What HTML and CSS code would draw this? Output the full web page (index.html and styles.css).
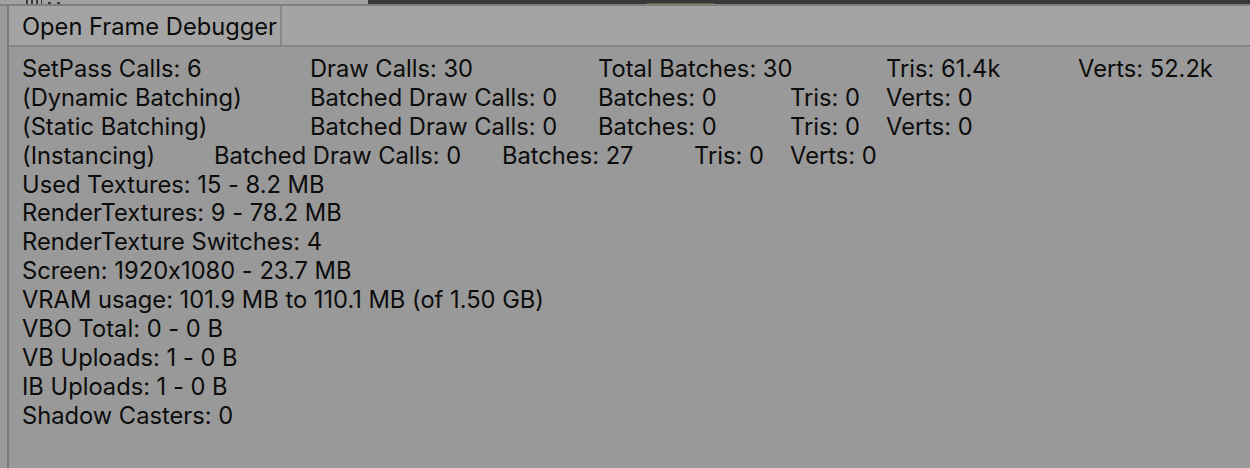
FILE: index.html
```html
<!DOCTYPE html>
<html>
<head>
<meta charset="utf-8">
<link rel="stylesheet" href="styles.css">
</head>
<body>
<div class="topstrip">
  <div class="tab-left"><span class="glyph"></span><span class="glyph small"></span><span class="glyph small"></span></div>
  <div class="tab-dark"><span class="accent"></span></div>
</div>
<div class="divider"></div>
<div class="main">
  <div class="gutter"></div>
  <div class="vline"></div>
  <div class="panel">
    <div class="toolbar">
      <div class="button">Open Frame Debugger</div>
    </div>
    <div class="stats">
      <div class="row">
        <span class="w3">SetPass Calls: 6</span><span class="w3">Draw Calls: 30</span><span class="w3">Total Batches: 30</span><span class="w2">Tris: 61.4k</span><span>Verts: 52.2k</span>
      </div>
      <div class="row">
        <span class="w3">(Dynamic Batching)</span><span class="w3">Batched Draw Calls: 0</span><span class="w2">Batches: 0</span><span class="w1">Tris: 0</span><span>Verts: 0</span>
      </div>
      <div class="row">
        <span class="w3">(Static Batching)</span><span class="w3">Batched Draw Calls: 0</span><span class="w2">Batches: 0</span><span class="w1">Tris: 0</span><span>Verts: 0</span>
      </div>
      <div class="row">
        <span class="w2">(Instancing)</span><span class="w3">Batched Draw Calls: 0</span><span class="w2">Batches: 27</span><span class="w1">Tris: 0</span><span>Verts: 0</span>
      </div>
      <div class="row">Used Textures: 15 - 8.2 MB</div>
      <div class="row">RenderTextures: 9 - 78.2 MB</div>
      <div class="row">RenderTexture Switches: 4</div>
      <div class="row">Screen: 1920x1080 - 23.7 MB</div>
      <div class="row">VRAM usage: 101.9 MB to 110.1 MB (of 1.50 GB)</div>
      <div class="row">VBO Total: 0 - 0 B</div>
      <div class="row">VB Uploads: 1 - 0 B</div>
      <div class="row">IB Uploads: 1 - 0 B</div>
      <div class="row">Shadow Casters: 0</div>
    </div>
  </div>
</div>
</body>
</html>
```
FILE: styles.css
```css
html, body {
  margin: 0;
  padding: 0;
}
body {
  width: 1250px;
  height: 468px;
  overflow: hidden;
  background: #999999;
  font-family: Inter, "Noto Sans", sans-serif;
  font-feature-settings: "calt" 0;
  color: #0c0c0c;
  --u: 96px;
}
.topstrip {
  display: flex;
  height: 4px;
}
.tab-left {
  width: 368px;
  background: #a2a2a2;
  display: flex;
  gap: 6px;
  padding-left: 26px;
  box-sizing: border-box;
  align-items: flex-end;
}
.glyph {
  width: 16px;
  height: 4px;
  background: repeating-linear-gradient(90deg, #3a3a3a 0 2px, transparent 2px 5px);
}
.glyph.small {
  width: 3px;
  height: 2px;
  background: #3a3a3a;
}
.tab-dark {
  flex: 1;
  background: #383838;
  display: flex;
  align-items: flex-end;
}
.accent {
  margin-left: 279px;
  width: 68px;
  height: 1px;
  background: #5e6b37;
}
.divider {
  height: 2px;
  background: #7f7f7f;
}
.main {
  display: flex;
  height: 462px;
}
.gutter {
  width: 7px;
  background: #9b9b9b;
}
.vline {
  width: 2px;
  background: #7a7a7a;
}
.panel {
  flex: 1;
  display: flex;
  flex-direction: column;
}
.toolbar {
  height: 39px;
  background: #a4a4a4;
  border-bottom: 2px solid #858585;
  display: flex;
}
.button {
  width: 258px;
  padding: 2px 0 0 13px;
  box-sizing: content-box;
  border-right: 2px solid #878787;
  font-size: 23.7px;
  line-height: 37px;
  white-space: nowrap;
}
.stats {
  padding: 8px 0 0 13px;
  font-size: 23.7px;
}
.row {
  display: flex;
  height: 28.9px;
  line-height: 28.9px;
  white-space: nowrap;
}
.w1 { width: var(--u); }
.w2 { width: calc(var(--u) * 2); }
.w3 { width: calc(var(--u) * 3); }
```
